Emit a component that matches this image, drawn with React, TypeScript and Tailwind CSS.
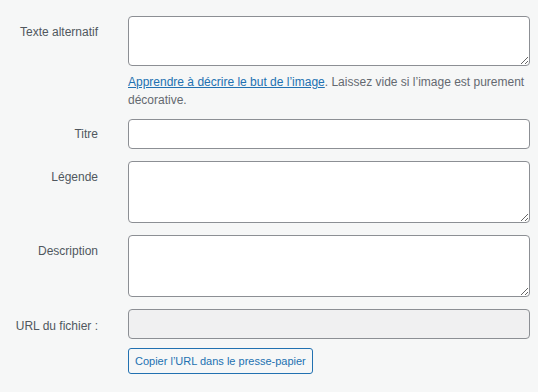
import type { ReactNode } from "react"

const font = { fontFamily: '"Liberation Sans", Arial, sans-serif' }

function Row({ label, children, labelPad = "pt-[10px]" }: { label: string; children: ReactNode; labelPad?: string }) {
  return (
    <div className="flex">
      <label className={`w-[98px] shrink-0 text-right text-[12px] leading-[18px] text-[#50575e] ${labelPad}`}>{label}</label>
      <div className="ml-[30px] w-[402px]">{children}</div>
    </div>
  )
}

export default function App() {
  return (
    <div className="min-h-[392px] w-[538px] bg-[#f6f7f7] pt-4" style={font}>
      <div className="flex flex-col">
        <Row label="Texte alternatif" labelPad="pt-[7px]">
          <textarea className="block h-[50px] w-full rounded-[4px] border border-[#8c8f94] bg-white px-2 py-1 text-[12px] outline-none" />
          <p className="mt-[7px] text-[12px] leading-[18px] text-[#646970]">
            <a href="#" className="text-[#2271b1] underline">Apprendre à décrire le but de l’image</a>. Laissez vide si l’image est purement décorative.
          </p>
        </Row>
        <div className="mt-[10px]">
          <Row label="Titre" labelPad="pt-[6px]">
            <input className="block h-[30px] w-full rounded-[4px] border border-[#8c8f94] bg-white px-2 text-[12px] outline-none" />
          </Row>
        </div>
        <div className="mt-3">
          <Row label="Légende" labelPad="pt-[7px]">
            <textarea className="block h-[62px] w-full rounded-[4px] border border-[#8c8f94] bg-white px-2 py-1 text-[12px] outline-none" />
          </Row>
        </div>
        <div className="mt-3">
          <Row label="Description" labelPad="pt-[7px]">
            <textarea className="block h-[62px] w-full rounded-[4px] border border-[#8c8f94] bg-white px-2 py-1 text-[12px] outline-none" />
          </Row>
        </div>
        <div className="mt-3">
          <Row label="URL du fichier :" labelPad="pt-[8px]">
            <input readOnly className="block h-[30px] w-full rounded-[4px] border border-[#8c8f94] bg-[#f0f0f1] px-2 text-[12px] outline-none" />
            <button className="mt-[9px] h-[26px] rounded-[3px] border border-[#2271b1] bg-[#f6f7f7] px-[6px] text-[11px] text-[#2271b1]">
              Copier l’URL dans le presse-papier
            </button>
          </Row>
        </div>
      </div>
    </div>
  )
}
